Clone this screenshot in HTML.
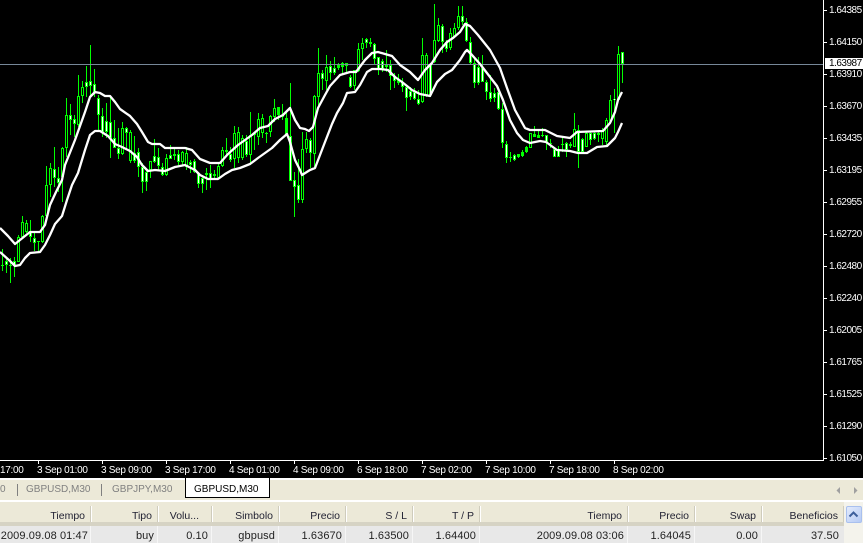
<!DOCTYPE html>
<html><head><meta charset="utf-8"><style>
html,body{margin:0;padding:0;background:#000;width:863px;height:543px;overflow:hidden}
body{position:relative;font-family:"Liberation Sans",sans-serif}
svg{position:absolute;left:0;top:0}
.p{position:absolute;left:829px;color:#fff;font-size:10px;letter-spacing:-.5px;line-height:12px;height:12px;white-space:nowrap;margin-top:1px}
.t{position:absolute;top:465px;color:#fff;font-size:10px;letter-spacing:-.3px;line-height:12px;white-space:nowrap}
.b{position:absolute;left:0;width:863px}
.h,.r{position:absolute;font-size:10.5px;line-height:14px;height:14px;color:#223;white-space:nowrap;transform:translateX(-100%)}
.h{top:509px}.r{top:529px;font-size:11px;letter-spacing:.1px;color:#222}
.g{position:absolute;top:483px;font-size:10px;line-height:14px;color:#808080;white-space:nowrap}
.s{position:absolute;top:506px;width:2px;height:16px;background:#fff;border-left:1px solid #cfccbc;box-sizing:border-box}
.q{position:absolute;top:526px;width:1px;height:17px;background:#f6f6f6}
</style></head><body>
<svg width="863" height="480" viewBox="0 0 863 480">
<path fill="none" stroke="#00ff00" stroke-width="1" shape-rendering="crispEdges" d="M2.5 249V271M6.5 258V273M10.5 258V283M14.5 257V277M18.5 235V262M22.5 216V237M26.5 220V233M30.5 220V242M34.5 233V251M38.5 241V251M42.5 215V243M46.5 166V217M50.5 163V197M54.5 147V187M58.5 167V192M62.5 147V202M66.5 98V157M70.5 104V135M74.5 115V137M78.5 75V127M82.5 81V103M86.5 66V97M90.5 45V97M94.5 69V97M98.5 95V132M102.5 108V137M106.5 103V138M110.5 97V158M114.5 120V148M118.5 128V159M122.5 122V155M126.5 127V150M130.5 130V163M134.5 136V163M138.5 148V177M142.5 163V193M146.5 170V191M150.5 161V178M154.5 139V163M158.5 148V170M162.5 163V176M166.5 154V176M170.5 145V159M174.5 148V160M178.5 150V165M182.5 151V165M186.5 147V170M190.5 160V173M194.5 159V173M198.5 172V188M202.5 175V193M206.5 168V190M210.5 165V188M214.5 170V180M218.5 163V178M222.5 147V167M226.5 138V157M230.5 147V162M234.5 126V168M238.5 127V163M242.5 135V160M246.5 135V157M250.5 112V165M254.5 132V150M258.5 113V145M262.5 114V138M266.5 132V143M270.5 115V137M274.5 99V122M278.5 107V120M282.5 104V120M286.5 113V135M290.5 83V181M294.5 172V217M298.5 159V203M302.5 132V203M306.5 132V153M310.5 138V168M314.5 95V168M318.5 48V105M322.5 70V90M326.5 55V90M330.5 61V80M334.5 57V75M338.5 63V70M342.5 62V75M346.5 63V72M350.5 75V88M354.5 70V90M358.5 43V72M362.5 38V60M366.5 38V48M370.5 38V47M374.5 43V65M378.5 57V75M382.5 59V72M386.5 50V72M390.5 60V90M394.5 73V88M398.5 74V85M402.5 78V92M406.5 87V111M410.5 87V100M414.5 88V100M418.5 90V105M422.5 38V103M426.5 53V97M430.5 65V97M434.5 4V63M438.5 18V42M442.5 24V53M446.5 40V52M450.5 28V50M454.5 23V38M458.5 6V30M462.5 6V25M466.5 18V42M470.5 37V65M474.5 57V88M478.5 57V85M482.5 55V82M486.5 80V100M490.5 75V102M494.5 88V102M498.5 87V110M502.5 103V148M506.5 141V163M510.5 152V162M514.5 154V161M518.5 154V158M522.5 150V157M526.5 146V153M530.5 133V147M534.5 126V137M538.5 131V138M542.5 128V137M546.5 135V150M550.5 139V148M554.5 147V157M558.5 146V157M562.5 138V152M566.5 142V157M570.5 142V148M574.5 113V147M578.5 125V168M582.5 138V152M586.5 132V147M590.5 132V145M594.5 132V140M598.5 130V142M602.5 128V145M606.5 118V145M610.5 95V122M614.5 89V133M618.5 46V100M622.5 52V83"/>
<path fill="none" stroke="#00ff00" stroke-width="3" shape-rendering="crispEdges" d="M2.5 265V266M6.5 261V265M10.5 265V266M14.5 261V266M18.5 237V262M22.5 222V237M26.5 223V232M30.5 232V237M34.5 238V243M38.5 241V242M42.5 216V242M46.5 185V216M50.5 168V185M54.5 169V178M58.5 178V183M62.5 148V177M66.5 115V148M70.5 115V120M74.5 119V124M78.5 96V125M82.5 87V96M86.5 82V87M90.5 81V86M94.5 84V92M98.5 98V115M102.5 116V132M106.5 121V132M110.5 122V138M114.5 138V148M118.5 148V154M122.5 128V154M126.5 128V133M130.5 132V161M134.5 153V161M138.5 152V167M142.5 167V182M146.5 172V182M150.5 161V170M154.5 156V162M158.5 157V166M162.5 167V175M166.5 158V175M170.5 155V159M174.5 154V156M178.5 154V162M182.5 152V162M186.5 153V167M190.5 162V165M194.5 161V172M198.5 173V184M202.5 178V184M206.5 173V175M210.5 173V180M214.5 174V176M218.5 166V178M222.5 150V166M226.5 150V152M230.5 154V160M234.5 133V159M238.5 132V158M242.5 138V158M246.5 141V155M250.5 135V155M254.5 133V135M258.5 119V137M262.5 118V133M266.5 133V134M270.5 116V132M274.5 108V117M278.5 107V115M282.5 115V117M286.5 118V135M290.5 136V181M294.5 180V187M298.5 185V200M302.5 149V200M306.5 139V149M310.5 140V153M314.5 96V154M318.5 73V97M322.5 73V79M326.5 67V81M330.5 66V73M334.5 68V73M338.5 65V68M342.5 63V67M346.5 63V66M350.5 77V87M354.5 70V86M358.5 49V71M362.5 43V49M366.5 39V43M370.5 42V44M374.5 44V59M378.5 57V69M382.5 61V69M386.5 64V67M390.5 65V76M394.5 76V81M398.5 80V83M402.5 82V87M406.5 87V98M410.5 91V97M414.5 92V99M418.5 99V104M422.5 55V102M426.5 55V95M430.5 65V95M434.5 40V62M438.5 25V41M442.5 26V42M446.5 42V49M450.5 33V48M454.5 28V37M458.5 16V28M462.5 16V22M466.5 22V41M470.5 42V63M474.5 63V83M478.5 67V83M482.5 68V82M486.5 82V92M490.5 92V99M494.5 93V98M498.5 92V109M502.5 109V143M506.5 144V158M510.5 157V158M514.5 155V160M518.5 154V157M522.5 152V156M526.5 147V152M530.5 133V148M534.5 134V137M538.5 135V138M542.5 135V136M546.5 135V142M550.5 143V144M554.5 149V157M558.5 149V157M562.5 144V145M566.5 143V150M570.5 144V146M574.5 129V147M578.5 130V152M582.5 139V152M586.5 133V147M590.5 133V140M594.5 133V139M598.5 133V135M602.5 130V139M606.5 120V142M610.5 100V121M614.5 99V100M618.5 54V100M622.5 52V64"/>
<path fill="none" stroke="#000" stroke-width="1" shape-rendering="crispEdges" d="M18.5 238V261M22.5 223V236M26.5 224V231M42.5 217V241M46.5 186V215M50.5 169V184M62.5 149V176M66.5 116V147M78.5 97V124M82.5 88V95M122.5 129V153M130.5 133V160M150.5 162V169M166.5 159V174M182.5 153V161M186.5 154V166M218.5 167V177M222.5 151V165M234.5 134V158M238.5 133V157M242.5 139V157M250.5 136V154M258.5 120V136M262.5 119V132M270.5 117V131M274.5 109V116M302.5 150V199M306.5 140V148M314.5 97V153M318.5 74V96M326.5 68V80M354.5 71V85M358.5 50V70M362.5 44V48M422.5 56V101M426.5 56V94M434.5 41V61M438.5 26V40M450.5 34V47M454.5 29V36M458.5 17V27M530.5 134V147M574.5 130V146M586.5 134V146M602.5 131V138M606.5 121V141M610.5 101V120M618.5 55V99"/>
<path fill="none" stroke="#fff" stroke-width="1" shape-rendering="crispEdges" d="M6.5 262V264M14.5 262V265M30.5 233V236M34.5 239V242M54.5 170V177M58.5 179V182M70.5 116V119M74.5 120V123M86.5 83V86M90.5 82V85M94.5 85V91M98.5 99V114M102.5 117V131M106.5 122V131M110.5 123V137M114.5 139V147M118.5 149V153M126.5 129V132M134.5 154V160M138.5 153V166M142.5 168V181M146.5 173V181M154.5 157V161M158.5 158V165M162.5 168V174M170.5 156V158M178.5 155V161M190.5 163V164M194.5 162V171M198.5 174V183M202.5 179V183M210.5 174V179M230.5 155V159M246.5 142V154M290.5 137V180M294.5 181V186M298.5 186V199M310.5 141V152M322.5 74V78M330.5 67V72M334.5 69V72M350.5 78V86M366.5 40V42M374.5 45V58M378.5 58V68M382.5 62V68M390.5 66V75M394.5 77V80M402.5 83V86M406.5 88V97M410.5 92V96M414.5 93V98M418.5 100V103M430.5 66V94M442.5 27V41M446.5 43V48M462.5 17V21M466.5 23V40M470.5 43V62M474.5 64V82M478.5 68V82M482.5 69V81M486.5 83V91M490.5 93V98M494.5 94V97M498.5 93V108M502.5 110V142M506.5 145V157M514.5 156V159M546.5 136V141M554.5 150V156M558.5 150V156M566.5 144V149M578.5 131V151M582.5 140V151M590.5 134V139M594.5 134V138M614.5 99V100M622.5 53V63"/>
<path d="M0 64.5H823" stroke="#778899" stroke-width="1" shape-rendering="crispEdges"/>
<path fill="none" stroke="#fff" stroke-width="2.3" stroke-linejoin="round" d="M0 228L8 236L15 244L20 240L30 232L40 232L45 225L50 205L56 192L62 180L65 165L75 140L85 112L90 97L95 92L100 93L105 96L110 96L115 102L120 109L130 116L137 124L142 132L148 142L152 144L160 144L165 148L185 148L192 150L200 159L210 163L220 163L228 154L238 145L245 140L252 135L260 128L268 126L275 119L283 115L290 108L295 120L300 128L305 129L309 131L313 127L318 108L325 95L330 86L340 75L350 72L356 72L365 60L372 53L378 52L385 54L392 56L400 65L410 72L418 80L425 70L432 63L440 50L447 42L453 38L460 32L465 24L470 26L478 35L490 50L500 68L507 88L515 110L525 128L530 130L545 130L557 136L570 138L577 132L603 131L610 123L615 112L618 100L622 92"/>
<path fill="none" stroke="#fff" stroke-width="2.3" stroke-linejoin="round" d="M0 252L10 261L15 266L20 265L25 258L30 253L40 252L45 245L50 235L55 224L62 216L67 200L72 185L78 173L85 150L90 135L95 131L100 131L108 136L115 144L122 147L130 151L137 157L142 165L148 171L155 170L165 171L175 167L185 165L195 170L200 175L208 179L218 179L225 174L232 170L240 168L250 164L258 158L265 153L272 148L280 140L287 134L290 142L295 160L300 170L302 175L310 170L315 168L320 155L325 142L332 124L337 113L343 103L347 93L355 92L360 85L367 72L372 69L380 69L388 70L395 77L402 82L412 90L420 94L430 96L437 82L445 74L452 70L460 60L465 52L467 50L472 55L480 64L490 77L497 86L503 100L510 120L517 133L523 140L530 143L540 141L546 142L557 150L570 151L578 153L587 153L597 147L607 146L615 138L618 132L622 123"/>
<path fill="none" stroke="#fff" stroke-width="1" shape-rendering="crispEdges" d="M823.5 0V461M0 460.5H824M38.5 461V464M102.5 461V464M166.5 461V464M230.5 461V464M294.5 461V464M358.5 461V464M422.5 461V464M486.5 461V464M550.5 461V464M614.5 461V464M824 10.5H827M824 42.5H827M824 74.5H827M824 106.5H827M824 138.5H827M824 170.5H827M824 202.5H827M824 234.5H827M824 266.5H827M824 298.5H827M824 330.5H827M824 362.5H827M824 394.5H827M824 426.5H827M824 458.5H827"/>
</svg>
<div style="position:absolute;left:825px;top:58px;width:38px;height:11px;background:#fff"></div>
<div class="p" style="top:57px;color:#000">1.63987</div>
<div class="p" style="top:4px">1.64385</div><div class="p" style="top:36px">1.64150</div><div class="p" style="top:68px">1.63910</div><div class="p" style="top:100px">1.63670</div><div class="p" style="top:132px">1.63435</div><div class="p" style="top:164px">1.63195</div><div class="p" style="top:196px">1.62955</div><div class="p" style="top:228px">1.62720</div><div class="p" style="top:260px">1.62480</div><div class="p" style="top:292px">1.62240</div><div class="p" style="top:324px">1.62005</div><div class="p" style="top:356px">1.61765</div><div class="p" style="top:388px">1.61525</div><div class="p" style="top:420px">1.61290</div><div class="p" style="top:452px">1.61050</div>
<div class="t" style="left:0">17:00</div><div class="t" style="left:37px">3 Sep 01:00</div><div class="t" style="left:101px">3 Sep 09:00</div><div class="t" style="left:165px">3 Sep 17:00</div><div class="t" style="left:229px">4 Sep 01:00</div><div class="t" style="left:293px">4 Sep 09:00</div><div class="t" style="left:357px">6 Sep 18:00</div><div class="t" style="left:421px">7 Sep 02:00</div><div class="t" style="left:485px">7 Sep 10:00</div><div class="t" style="left:549px">7 Sep 18:00</div><div class="t" style="left:613px">8 Sep 02:00</div>

<div class="b" style="top:478px;height:2px;background:#fff"></div>
<div class="b" style="top:480px;height:20px;background:#ece9d8"></div>
<div class="b" style="top:500px;height:2px;background:#fff"></div>
<div class="b" style="top:502px;height:20px;background:#ece9d8"></div>
<div class="b" style="top:522px;height:4px;background:#d6d3c4"></div>
<div class="b" style="top:526px;height:17px;background:#e8e8e8"></div>
<div class="g" style="left:0">0</div>
<div style="position:absolute;left:17px;top:484px;width:1px;height:12px;background:#808080"></div>
<div class="g" style="left:26px">GBPUSD,M30</div>
<div style="position:absolute;left:101px;top:484px;width:1px;height:12px;background:#808080"></div>
<div class="g" style="left:112px">GBPJPY,M30</div>
<div style="position:absolute;left:185px;top:478px;width:83px;height:19px;background:#fff;border:solid #000;border-width:0 1px 1px 1px"></div>
<div class="g" style="left:194px;color:#000">GBPUSD,M30</div>
<svg width="863" height="543" viewBox="0 0 863 543" style="pointer-events:none">
<path d="M840 487V494L836.500 490.500Z" fill="#a0a0a0"/><path d="M854 487V494L857.500 490.500Z" fill="#a0a0a0"/>
</svg>

<div class="s" style="left:90px"></div><div class="s" style="left:157px"></div><div class="s" style="left:211px"></div><div class="s" style="left:278px"></div><div class="s" style="left:345px"></div><div class="s" style="left:412px"></div><div class="s" style="left:479px"></div><div class="s" style="left:627px"></div><div class="s" style="left:694px"></div><div class="s" style="left:761px"></div><div class="s" style="left:843px"></div>
<div class="h" style="left:85px">Tiempo</div><div class="h" style="left:152px">Tipo</div><div class="h" style="left:199px">Volu...</div><div class="h" style="left:273px">Simbolo</div><div class="h" style="left:340px">Precio</div><div class="h" style="left:407px">S / L</div><div class="h" style="left:474px">T / P</div><div class="h" style="left:622px">Tiempo</div><div class="h" style="left:689px">Precio</div><div class="h" style="left:756px">Swap</div><div class="h" style="left:838px">Beneficios</div>

<div class="q" style="left:90px"></div><div class="q" style="left:157px"></div><div class="q" style="left:211px"></div><div class="q" style="left:278px"></div><div class="q" style="left:345px"></div><div class="q" style="left:412px"></div><div class="q" style="left:479px"></div><div class="q" style="left:627px"></div><div class="q" style="left:694px"></div><div class="q" style="left:761px"></div>
<div class="r" style="left:88px">2009.09.08 01:47</div><div class="r" style="left:154px">buy</div><div class="r" style="left:208px">0.10</div><div class="r" style="left:275px">gbpusd</div><div class="r" style="left:342px">1.63670</div><div class="r" style="left:409px">1.63500</div><div class="r" style="left:476px">1.64400</div><div class="r" style="left:624px">2009.09.08 03:06</div><div class="r" style="left:691px">1.64045</div><div class="r" style="left:758px">0.00</div><div class="r" style="left:839px">37.50</div>

<div style="position:absolute;left:844px;top:502px;width:19px;height:41px;background:#f4f3ec"></div>
<div style="position:absolute;left:846px;top:506px;width:14px;height:15px;background:linear-gradient(135deg,#e3ebfc,#b5caf5);border:1px solid #a9c0ee;border-radius:2px"></div>
<svg width="863" height="543" viewBox="0 0 863 543"><path d="M849.500 516.500L853.500 512.500L857.500 516.500" fill="none" stroke="#3d5f9c" stroke-width="2"/></svg>
</body></html>
